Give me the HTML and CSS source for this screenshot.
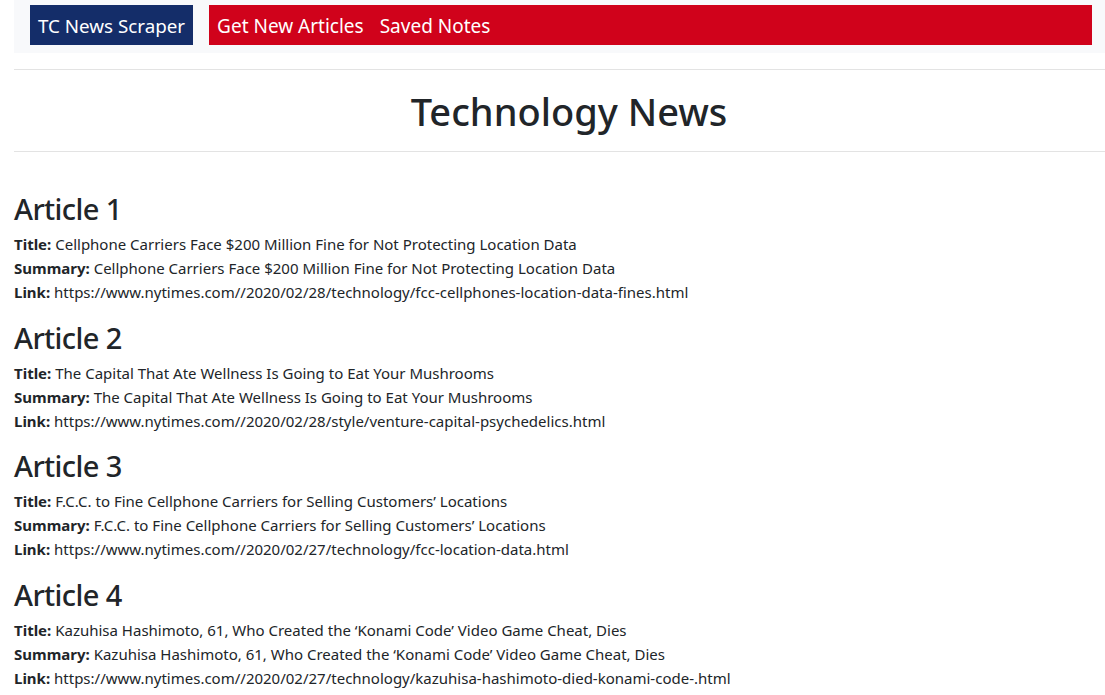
FILE: index.html
```html
<!DOCTYPE html>
<html>
<head>
<meta charset="utf-8">
<link rel="stylesheet" href="styles.css">
</head>
<body>
<div class="page">
  <nav class="navbar">
    <a class="brand">TC News Scraper</a>
    <div class="links">
      <a class="link">Get New Articles</a>
      <a class="link">Saved Notes</a>
    </div>
  </nav>
  <hr class="rule">
  <h1 class="title">Technology News</h1>
  <hr class="rule">
  <div class="articles">
    <div class="article">
      <h2 class="article-head">Article 1</h2>
      <div class="line"><b>Title:</b> Cellphone Carriers Face $200 Million Fine for Not Protecting Location Data</div>
      <div class="line"><b>Summary:</b> Cellphone Carriers Face $200 Million Fine for Not Protecting Location Data</div>
      <div class="line"><b>Link:</b> https://www.nytimes.com//2020/02/28/technology/fcc-cellphones-location-data-fines.html</div>
    </div>
    <div class="article">
      <h2 class="article-head">Article 2</h2>
      <div class="line"><b>Title:</b> The Capital That Ate Wellness Is Going to Eat Your Mushrooms</div>
      <div class="line"><b>Summary:</b> The Capital That Ate Wellness Is Going to Eat Your Mushrooms</div>
      <div class="line"><b>Link:</b> https://www.nytimes.com//2020/02/28/style/venture-capital-psychedelics.html</div>
    </div>
    <div class="article">
      <h2 class="article-head">Article 3</h2>
      <div class="line"><b>Title:</b> F.C.C. to Fine Cellphone Carriers for Selling Customers’ Locations</div>
      <div class="line"><b>Summary:</b> F.C.C. to Fine Cellphone Carriers for Selling Customers’ Locations</div>
      <div class="line"><b>Link:</b> https://www.nytimes.com//2020/02/27/technology/fcc-location-data.html</div>
    </div>
    <div class="article">
      <h2 class="article-head">Article 4</h2>
      <div class="line"><b>Title:</b> Kazuhisa Hashimoto, 61, Who Created the ‘Konami Code’ Video Game Cheat, Dies</div>
      <div class="line"><b>Summary:</b> Kazuhisa Hashimoto, 61, Who Created the ‘Konami Code’ Video Game Cheat, Dies</div>
      <div class="line"><b>Link:</b> https://www.nytimes.com//2020/02/27/technology/kazuhisa-hashimoto-died-konami-code-.html</div>
    </div>
  </div>
</div>
</body>
</html>
```
FILE: styles.css
```css
html, body {
  margin: 0;
  padding: 0;
  background: #fff;
}
body {
  font-family: "Noto Sans", "Open Sans", sans-serif;
  color: #212529;
  font-size: 16px;
  line-height: 1.5;
}
.page {
  padding-left: 14px;
}
.navbar {
  display: flex;
  align-items: stretch;
  gap: 16px;
  background: #f8f9fb;
  padding: 5px 13px 8px 16px;
  height: 40px;
}
.brand {
  background: #142d69;
  color: #fff;
  font-size: 18.8px;
  line-height: 38px;
  padding: 2px 8px 0 8px;
}
.links {
  flex: 1;
  display: flex;
  gap: 16px;
  background: #d0021b;
  padding: 2px 8px 0 8px;
}
.link {
  color: #fff;
  font-size: 19px;
  line-height: 38px;
}
.rule {
  border: 0;
  border-top: 1px solid #e3e3e3;
  margin: 16px 0 0 0;
}
.title {
  text-align: center;
  font-size: 38px;
  font-weight: 500;
  line-height: 48px;
  margin: 17px 0 14px 0;
  padding-left: 19px;
}
.articles {
  padding-top: 41px;
}
.article {
  margin-bottom: 17.7px;
}
.article-head {
  font-size: 29px;
  font-weight: 500;
  line-height: 32px;
  letter-spacing: -0.6px;
  margin: 0 0 7px 0;
}
.line {
  font-size: 15px;
  line-height: 24px;
}
.line b {
  font-weight: 700;
}
```
